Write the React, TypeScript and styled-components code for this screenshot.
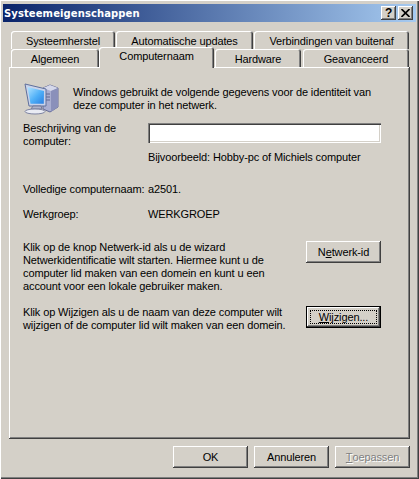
import React from 'react';
import styled, { createGlobalStyle } from 'styled-components';

const GlobalStyle = createGlobalStyle`
  html, body {
    margin: 0;
    padding: 0;
    background: #d4d0c8;
  }
  * { box-sizing: border-box; }
`;

const bevel = `
  box-shadow: inset -1px -1px 0 #404040, inset 1px 1px 0 #ffffff, inset -2px -2px 0 #808080;
`;

const Key = styled.span`
  text-decoration: underline;
`;

const IconImage = () => (
  <svg width="36" height="34" viewBox="0 0 36 34">
    <defs>
      <linearGradient id="screen" x1="0" y1="0" x2="1" y2="1">
        <stop offset="0" stopColor="#b4e4ff" />
        <stop offset="0.55" stopColor="#4fb0f8" />
        <stop offset="1" stopColor="#2a7fe0" />
      </linearGradient>
    </defs>
    <path d="M20 7 L27 4 L35 7 L35 26 L27 31 L20 28 Z" fill="#a9aed0" stroke="#666c96" strokeWidth="1" />
    <path d="M20 7 L27 4 L35 7 L28 10 Z" fill="#d5d8ea" />
    <path d="M28 10 L35 7 L35 26 L28 31 Z" fill="#8a90ba" />
    <path d="M22 13h5M22 16h5M22 19h5" stroke="#5f668f" strokeWidth="1" />
    <path d="M2 3 L23 8 L23 25 L6 25 Z" fill="#c9d3ea" stroke="#5f6f9c" strokeWidth="1" />
    <path d="M4.5 6 L21 10 L20.8 22.8 L7.5 22.8 Z" fill="url(#screen)" />
    <path d="M10 25 L18 25 L19 28 L8 28 Z" fill="#aeb3c9" stroke="#747a99" strokeWidth="1" />
    <ellipse cx="12" cy="30.5" rx="10" ry="2.5" fill="#e9ebf3" stroke="#7f85a3" strokeWidth="1" />
  </svg>
);

export default function App() {
  return (
    <Dialog>
      <GlobalStyle />
      <TitleBar>
        <Title>Systeemeigenschappen</Title>
        <TitleButton $gap>?</TitleButton>
        <TitleButton>
          <svg width="9" height="8" viewBox="0 0 9 8">
            <path d="M0.5 0 L8.5 8 M8.5 0 L0.5 8" stroke="#000" strokeWidth="1.6" />
          </svg>
        </TitleButton>
      </TitleBar>

      <Tabs>
        <TabRow>
          <Tab $w={104}>Systeemherstel</Tab>
          <Tab $w={137} $left={1}>Automatische updates</Tab>
          <Tab $w={155} $left={1}>Verbindingen van buitenaf</Tab>
        </TabRow>
        <TabRow>
          <Tab $w={88}>Algemeen</Tab>
          <Tab $w={115} $selected>Computernaam</Tab>
          <Tab $w={86} $left={1}>Hardware</Tab>
          <Tab $w={106} $left={2}>Geavanceerd</Tab>
        </TabRow>
      </Tabs>

      <Panel>
        <Intro>
          <IconImage />
          <IntroText>
            Windows gebruikt de volgende gegevens voor de identiteit van
            <br />
            deze computer in het netwerk.
          </IntroText>
        </Intro>

        <DescriptionRow>
          <Label>
            Beschrijving van de
            <br />
            computer:
          </Label>
          <TextInput />
        </DescriptionRow>
        <Example>Bijvoorbeeld: Hobby-pc of Michiels computer</Example>

        <InfoRow $top={19}>
          <Label>Volledige computernaam:</Label>
          <span>a2501.</span>
        </InfoRow>
        <InfoRow $top={12}>
          <Label>Werkgroep:</Label>
          <span>WERKGROEP</span>
        </InfoRow>

        <ActionRow $top={20}>
          <ActionText>
            Klik op de knop Netwerk-id als u de wizard
            <br />
            Netwerkidentificatie wilt starten. Hiermee kunt u de
            <br />
            computer lid maken van een domein en kunt u een
            <br />
            account voor een lokale gebruiker maken.
          </ActionText>
          <Button>
            N<Key>e</Key>twerk-id
          </Button>
        </ActionRow>

        <ActionRow $top={13}>
          <ActionText>
            Klik op Wijzigen als u de naam van deze computer wilt
            <br />
            wijzigen of de computer lid wilt maken van een domein.
          </ActionText>
          <Button $focused>
            <FocusRing>
              <Key>W</Key>ijzigen...
            </FocusRing>
          </Button>
        </ActionRow>
      </Panel>

      <Footer>
        <Button>OK</Button>
        <Button>Annuleren</Button>
        <Button $disabled>
          <Key>T</Key>oepassen
        </Button>
      </Footer>
    </Dialog>
  );
}

const Dialog = styled.div`
  width: 419px;
  height: 479px;
  padding: 4px 3px 0 3px;
  background: #d4d0c8;
  box-shadow: inset 1px 1px 0 #ffffff, inset -1px -1px 0 #404040, inset -2px -2px 0 #808080;
  font-family: "Liberation Sans", Arial, sans-serif;
  font-size: 11px;
  letter-spacing: -0.12px;
  line-height: 13px;
  color: #000000;
  overflow: hidden;
`;

const TitleBar = styled.div`
  height: 18px;
  display: flex;
  align-items: center;
  padding: 0 3px 0 1px;
  background: linear-gradient(90deg, #0a246a 0%, #a6caf0 100%);
`;

const Title = styled.div`
  flex: 1;
  color: #ffffff;
  font-family: "DejaVu Sans", Verdana, sans-serif;
  font-weight: 700;
  font-size: 10px;
  letter-spacing: 0.1px;
`;

const TitleButton = styled.div<{ $gap?: boolean }>`
  width: 15px;
  height: 14px;
  margin-right: ${(p) => (p.$gap ? '2px' : '0')};
  display: flex;
  align-items: center;
  justify-content: center;
  background: #d4d0c8;
  font-weight: 700;
  font-size: 12px;
  ${bevel}
`;

const Tabs = styled.div`
  margin: 9px 0 0 8px;
`;

const TabRow = styled.div`
  display: flex;
  height: 18px;
  position: relative;
`;

const Tab = styled.div<{ $w: number; $left?: number; $selected?: boolean }>`
  position: relative;
  width: ${(p) => p.$w}px;
  margin-left: ${(p) => p.$left ?? 0}px;
  margin-top: ${(p) => (p.$selected ? '-2px' : '0')};
  height: ${(p) => (p.$selected ? '21px' : '18px')};
  padding-top: ${(p) => (p.$selected ? '3px' : '4px')};
  text-align: center;
  background: #d4d0c8;
  border-radius: 3px 3px 0 0;
  z-index: ${(p) => (p.$selected ? 2 : 1)};
  box-shadow: inset 1px 1px 0 #ffffff, inset -1px 0 0 #404040, inset -2px 0 0 #808080;
`;

const Panel = styled.div`
  position: relative;
  width: 401px;
  height: 372px;
  margin-left: 6px;
  padding: 14px 29px 0 14px;
  ${bevel}
`;

const Intro = styled.div`
  display: flex;
  gap: 14px;
  height: 37px;
`;

const IntroText = styled.div`
  padding-top: 5px;
  white-space: nowrap;
`;

const Label = styled.div`
  width: 125px;
  flex: none;
  white-space: nowrap;
`;

const DescriptionRow = styled.div`
  display: flex;
  margin-top: 4px;
  align-items: flex-start;
`;

const TextInput = styled.div`
  width: 233px;
  height: 20px;
  margin-top: 1px;
  background: #ffffff;
  box-shadow: inset 1px 1px 0 #808080, inset 2px 2px 0 #404040, inset -1px -1px 0 #ffffff, inset -2px -2px 0 #d4d0c8;
`;

const Example = styled.div`
  margin: 3px 0 0 125px;
  white-space: nowrap;
`;

const InfoRow = styled.div<{ $top: number }>`
  display: flex;
  margin-top: ${(p) => p.$top}px;
`;

const ActionRow = styled.div<{ $top: number }>`
  display: flex;
  justify-content: space-between;
  align-items: flex-start;
  margin-top: ${(p) => p.$top}px;
`;

const ActionText = styled.div`
  white-space: nowrap;
`;

const Button = styled.div<{ $focused?: boolean; $disabled?: boolean }>`
  width: 75px;
  height: 22px;
  flex: none;
  display: flex;
  align-items: center;
  justify-content: center;
  background: #d4d0c8;
  color: ${(p) => (p.$disabled ? '#808080' : '#000000')};
  text-shadow: ${(p) => (p.$disabled ? '1px 1px 0 #ffffff' : 'none')};
  ${(p) =>
    p.$focused
      ? 'box-shadow: inset 0 0 0 1px #000000, inset -2px -2px 0 #404040, inset 2px 2px 0 #ffffff, inset -3px -3px 0 #808080;'
      : bevel}
`;

const FocusRing = styled.div`
  width: 67px;
  height: 14px;
  display: flex;
  align-items: center;
  justify-content: center;
  border: 1px dotted #000000;
`;

const Footer = styled.div`
  display: flex;
  justify-content: flex-end;
  gap: 6px;
  margin: 7px 6px 0 0;
`;
